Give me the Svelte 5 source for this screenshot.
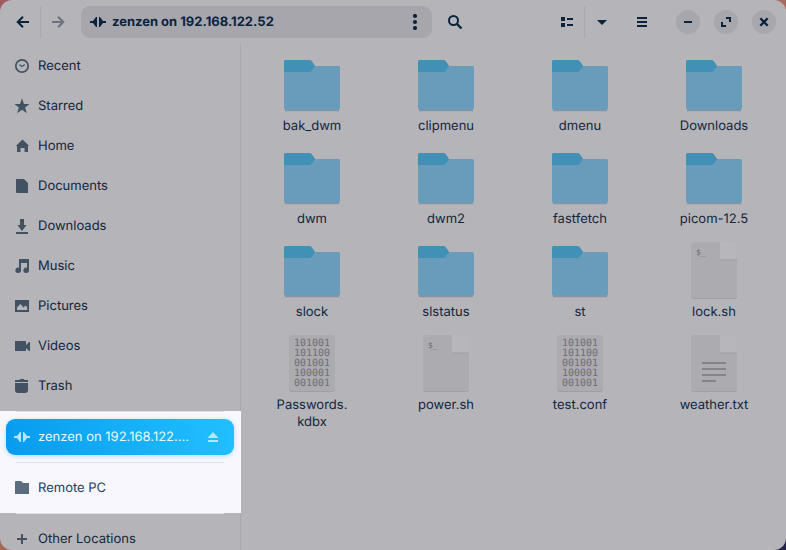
<script>
  const places = [
    { name: 'Recent', icon: 'recent' },
    { name: 'Starred', icon: 'star' },
    { name: 'Home', icon: 'home' },
    { name: 'Documents', icon: 'document' },
    { name: 'Downloads', icon: 'download' },
    { name: 'Music', icon: 'music' },
    { name: 'Pictures', icon: 'picture' },
    { name: 'Videos', icon: 'video' },
    { name: 'Trash', icon: 'trash' }
  ];

  const files = [
    { name: 'bak_dwm', kind: 'folder' },
    { name: 'clipmenu', kind: 'folder' },
    { name: 'dmenu', kind: 'folder' },
    { name: 'Downloads', kind: 'folder' },
    { name: 'dwm', kind: 'folder' },
    { name: 'dwm2', kind: 'folder' },
    { name: 'fastfetch', kind: 'folder' },
    { name: 'picom-12.5', kind: 'folder' },
    { name: 'slock', kind: 'folder' },
    { name: 'slstatus', kind: 'folder' },
    { name: 'st', kind: 'folder' },
    { name: 'lock.sh', kind: 'script' },
    { name: 'Passwords.\nkdbx', kind: 'binary' },
    { name: 'power.sh', kind: 'script' },
    { name: 'test.conf', kind: 'binary' },
    { name: 'weather.txt', kind: 'text' }
  ];

  const bits = ['101001', '101100', '001001', '100001', '001001'];
</script>

{#snippet glyph(icon)}
  <svg class="glyph" width="16" height="16" viewBox="0 0 16 16" fill="currentColor" aria-hidden="true">
    {#if icon === 'recent'}
      <circle cx="8" cy="8" r="6.2" fill="none" stroke="currentColor" stroke-width="1.7" />
      <path d="M5.4 6.4 8 8.4l2.8-1.8" fill="none" stroke="currentColor" stroke-width="1.2" />
    {:else if icon === 'star'}
      <path d="M8 .3 10 6h5.6l-4.5 3.5 1.8 5.8L8 11.8l-4.9 3.5 1.8-5.8L.4 6H6z" />
    {:else if icon === 'home'}
      <path d="M8.500 1.500 1.800 8H3v6h3.500v-4h4v4H14V8h1.200z" />
    {:else if icon === 'document'}
      <path d="M2.500 1H10l4 4v10H3a1 1 0 0 1-1-1V1.500z" />
    {:else if icon === 'download'}
      <path d="M6 1h4v6h2.500L8 13 3.500 7H6zM2 14h12v2H2z" />
    {:else if icon === 'music'}
      <path d="M5 1h10v11.300a2.800 2.700 0 1 1-2-2.600V5H7v7.300a2.800 2.700 0 1 1-2-2.600z" />
    {:else if icon === 'picture'}
      <path fill-rule="evenodd" d="M1 2h14v12H1zM3 12h10.200V9l-2-1.600-1.500 2L6.300 6 3 9.500z" />
    {:else if icon === 'video'}
      <path d="M1 3h11v4l3-3h1v9h-1l-3-3v3H1z" />
    {:else if icon === 'trash'}
      <path d="M1 2h4.500l.5-1h4l.5 1H14v2H1zM1 5h13v7a3 3 0 0 1-3 3H4a3 3 0 0 1-3-3z" />
    {:else if icon === 'network'}
      <path d="M7 3v10H6L3 9H0V7h3l3-4zM9 3h1l3 4h3v2h-3l-3 4H9z" />
    {:else if icon === 'folder'}
      <path d="M1 2a1 1 0 0 1 1-1h5l2 2h6v11H1z" />
    {:else if icon === 'plus'}
      <path d="M7 3h2v4h4v2H9v4H7V9H3V7h4z" />
    {:else if icon === 'eject'}
      <path d="M8 3 13.500 9h-11zM3 11h10v2H3z" />
    {:else if icon === 'back'}
      <path d="M14 8H3M8 2.700 2.700 8 8 13.300" fill="none" stroke="currentColor" stroke-width="2" />
    {:else if icon === 'forward'}
      <path d="M2 8h11M8 2.700 13.300 8 8 13.300" fill="none" stroke="currentColor" stroke-width="2" />
    {:else if icon === 'dots'}
      <circle cx="8" cy="2" r="2.100" /><circle cx="8" cy="8" r="2.100" /><circle cx="8" cy="14" r="2.100" />
    {:else if icon === 'search'}
      <path d="M10 10 14.500 14.500" stroke="currentColor" stroke-width="2.400" />
      <circle cx="6.500" cy="6.500" r="4.500" fill="none" stroke="currentColor" stroke-width="2" />
    {:else if icon === 'list'}
      <path d="M2 3h4v4H2zM8 4h6v2H8zM2 9h4v4H2zM8 10h6v2H8z" />
    {:else if icon === 'down'}
      <path d="M3 6h10l-5 5z" />
    {:else if icon === 'menu'}
      <path d="M3 3h10v2H3zM3 7h10v2H3zM3 11h10v2H3z" />
    {:else if icon === 'minimize'}
      <path d="M4 7h8v2H4z" />
    {:else if icon === 'maximize'}
      <path d="M8 3h5v5h-2V5H8zM3 8h2v3h3v2H3z" />
    {:else if icon === 'close'}
      <path d="m4.300 4.300 7.400 7.400m0-7.400-7.400 7.400" stroke="currentColor" stroke-width="2.300" />
    {/if}
  </svg>
{/snippet}

{#snippet thumbnail(kind)}
  <svg class="thumb" width="64" height="64" viewBox="0 0 64 64" aria-hidden="true">
    {#if kind === 'folder'}
      <path d="M5 58.500h54" stroke="#8b929f" stroke-width="1.500" />
      <path d="M4 10q0-2 2-2h23q1.500 0 2.500 1l3.500 5h23.500q1.500 0 1.500 1.500V56q0 2-2 2H6q-2 0-2-2z" fill="#699bbb" />
      <path d="M4 10q0-2 2-2h23q1.500 0 2.500 1l3.500 5-3.500 5q-1 1-2.500 1H4z" fill="#4190b6" />
    {:else if kind === 'binary'}
      <rect x="9" y="5" width="46" height="56" rx="3" fill="#9f9ea3" />
      <rect x="9" y="4" width="46" height="56" rx="3" fill="#acabaf" />
      {#each bits as row, i}
        <text class="bits" x="14" y={15 + i * 10}>{row}</text>
      {/each}
    {:else}
      <path d="M9 8q0-3 3-3h26v18h17v35q0 3-3 3H12q-3 0-3-3z" fill="#9f9ea3" />
      <path d="M9 7q0-3 3-3h26v18h17v35q0 3-3 3H12q-3 0-3-3z" fill="#acabaf" />
      <path d="M38 4h14q2 0 2 2v16H38z" fill="#b7b6bb" />
      <path d="M38 22h17" stroke="#9f9ea3" />
      {#if kind === 'script'}
        <text class="prompt" x="14" y="17">$_</text>
      {:else}
        <path d="M20 32h24M20 38h24M20 44h24M20 50h14" stroke="#858489" stroke-width="2" />
      {/if}
    {/if}
  </svg>
{/snippet}

<div class="window">
  <header>
    <button class="tool" aria-label="Back">{@render glyph('back')}</button>
    <span class="rule"></span>
    <button class="tool faded" aria-label="Forward">{@render glyph('forward')}</button>
    <div class="path">
      {@render glyph('network')}
      <span class="crumb">zenzen on 192.168.122.52</span>
      <button class="plain" aria-label="Folder options">{@render glyph('dots')}</button>
    </div>
    <button class="tool search" aria-label="Search">{@render glyph('search')}</button>
    <button class="tool" aria-label="List view">{@render glyph('list')}</button>
    <span class="rule"></span>
    <button class="tool" aria-label="View options">{@render glyph('down')}</button>
    <button class="tool menu" aria-label="Main menu">{@render glyph('menu')}</button>
    <div class="controls">
      <button aria-label="Minimize">{@render glyph('minimize')}</button>
      <button aria-label="Maximize">{@render glyph('maximize')}</button>
      <button aria-label="Close">{@render glyph('close')}</button>
    </div>
  </header>

  <div class="body">
    <nav aria-label="Places">
      <div class="group places">
        {#each places as place}
          <a class="row" href="#{place.icon}">{@render glyph(place.icon)}<span>{place.name}</span></a>
        {/each}
      </div>
      <div class="mounts">
        <div class="group">
          <div class="row selected">
            <a href="#mount">{@render glyph('network')}<span>zenzen on 192.168.122....</span></a>
            <button class="plain" aria-label="Eject">{@render glyph('eject')}</button>
          </div>
        </div>
        <div class="group">
          <a class="row" href="#remote">{@render glyph('folder')}<span>Remote PC</span></a>
        </div>
      </div>
      <div class="group">
        <a class="row" href="#other">{@render glyph('plus')}<span>Other Locations</span></a>
      </div>
    </nav>

    <main>
      {#each files as file}
        <button class="file">
          {@render thumbnail(file.kind)}
          <span>{file.name}</span>
        </button>
      {/each}
    </main>
  </div>
</div>

<style>
  :global(body) {
    margin: 0;
    background:
      linear-gradient(#a05a60, #a5674f) left / 50% 100% no-repeat,
      linear-gradient(#a86a64, #25234a) right / 50% 100% no-repeat;
  }

  .window {
    height: 100vh;
    display: flex;
    flex-direction: column;
    overflow: hidden;
    border-radius: 12px;
    background: #b5b4b9;
    color: #13263d;
    font: 13px/17px Inter, 'Noto Sans', sans-serif;
    font-optical-sizing: none;
    text-rendering: geometricPrecision;
  }

  button {
    display: flex;
    align-items: center;
    justify-content: center;
    padding: 0;
    border: 0;
    background: none;
    color: inherit;
    font: inherit;
    font-optical-sizing: none;
    text-rendering: inherit;
    cursor: pointer;
  }

  a {
    color: inherit;
    text-decoration: none;
  }

  svg {
    display: block;
    flex: none;
  }

  header {
    display: flex;
    flex: none;
    align-items: center;
    height: 44px;
    box-sizing: border-box;
    padding: 0 10px 0 6px;
    color: #0b233d;
  }

  .tool {
    flex: none;
    width: 34px;
    height: 32px;
  }

  .rule {
    flex: none;
    width: 1px;
    height: 32px;
    background: #a9a8ae;
  }

  .faded {
    color: #6c727f;
  }

  .path {
    display: flex;
    flex: 1;
    align-items: center;
    gap: 6px;
    max-width: 520px;
    min-width: 0;
    height: 32px;
    margin-left: 6px;
    padding: 0 9px;
    border-radius: 9px;
    background: #a7a6ad;
    box-sizing: border-box;
    font-weight: 700;
  }

  .crumb {
    flex: 1;
  }

  .search {
    margin: 0 auto 0 6px;
  }

  .search + .tool {
    margin-left: 78px;
  }

  .menu {
    margin: 0 17px 0 6px;
  }

  .controls {
    display: flex;
    gap: 14px;
  }

  .controls button {
    width: 24px;
    height: 24px;
    border-radius: 50%;
    background: #a8a7ad;
  }

  .body {
    display: flex;
    flex: 1;
    min-height: 0;
  }

  nav {
    flex: none;
    width: 241px;
    overflow: hidden;
    background: linear-gradient(#a9a8ae, #a9a8ae) right / 1px 100% no-repeat;
  }

  .group {
    padding: 7px 6px;
    border-top: 1px solid transparent;
    background: linear-gradient(#dcdfe8, #dcdfe8) 16px 0 / 208px 1px no-repeat border-box;
  }

  .places {
    display: flex;
    flex-direction: column;
    gap: 4px;
    padding: 4px 6px 7px;
    border: 0;
    background: none;
  }

  .mounts {
    background: #f7f7fd;
  }

  .row {
    display: flex;
    align-items: center;
    gap: 8px;
    height: 36px;
    padding: 0 13px 0 8px;
    border-radius: 9px;
    color: #13263d;
  }

  .row .glyph {
    color: #435263;
  }

  .mounts .row {
    color: #24405a;
  }

  .mounts .row .glyph {
    color: #5a6c80;
  }

  .mounts .selected {
    margin-right: 1px;
    background: linear-gradient(75deg, #079bee, #22c0ff);
    box-shadow: 0 1px 4px #a9dcf6;
    color: #e9f8ff;
  }

  .mounts .selected .glyph {
    color: #b5e6fd;
  }

  .selected a {
    display: flex;
    flex: 1;
    align-items: center;
    gap: 8px;
    min-width: 0;
    white-space: nowrap;
  }

  main {
    display: grid;
    flex: 1;
    grid-template-columns: repeat(auto-fill, minmax(130px, 1fr));
    align-content: start;
    row-gap: 10px;
    min-width: 0;
    padding: 8px 5px 8px 4px;
  }

  .file {
    flex-direction: column;
    justify-content: flex-start;
    gap: 2px;
    white-space: pre-line;
  }

  .bits,
  .prompt {
    font-family: 'DejaVu Sans Mono', monospace;
    fill: #6e6d73;
  }

  .bits {
    font-size: 10px;
  }

  .prompt {
    font-size: 8px;
  }
</style>
